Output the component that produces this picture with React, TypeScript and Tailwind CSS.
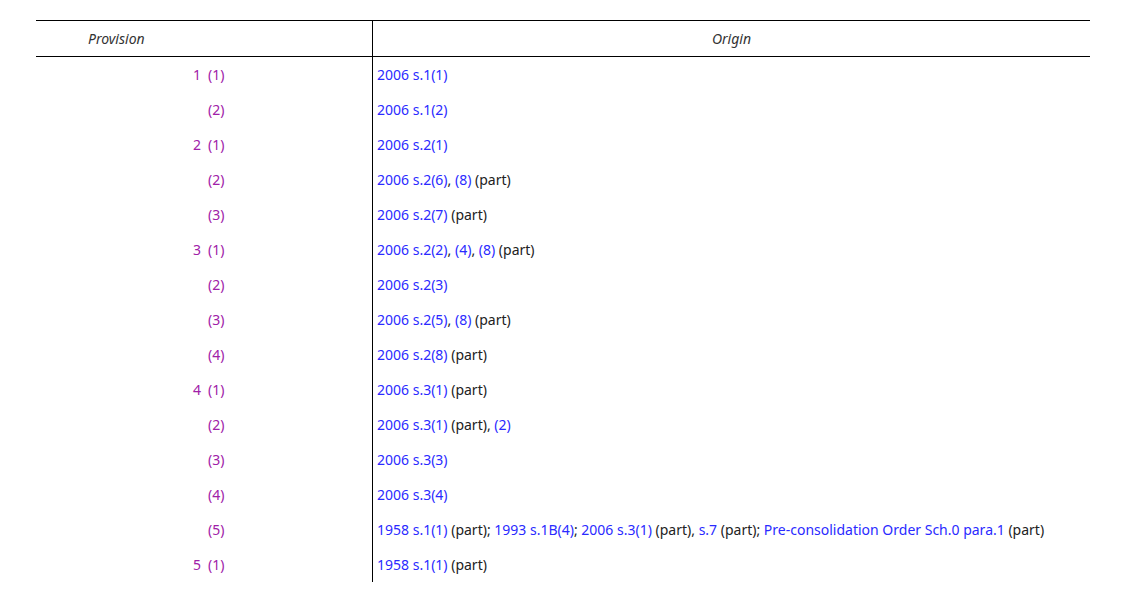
type Part = { t: string; link?: boolean }

const L = (t: string): Part => ({ t, link: true })
const T = (t: string): Part => ({ t })

const rows: { n?: string; s: string; origin: Part[] }[] = [
  { n: '1', s: '(1)', origin: [L('2006 s.1(1)')] },
  { s: '(2)', origin: [L('2006 s.1(2)')] },
  { n: '2', s: '(1)', origin: [L('2006 s.2(1)')] },
  { s: '(2)', origin: [L('2006 s.2(6)'), T(', '), L('(8)'), T(' (part)')] },
  { s: '(3)', origin: [L('2006 s.2(7)'), T(' (part)')] },
  { n: '3', s: '(1)', origin: [L('2006 s.2(2)'), T(', '), L('(4)'), T(', '), L('(8)'), T(' (part)')] },
  { s: '(2)', origin: [L('2006 s.2(3)')] },
  { s: '(3)', origin: [L('2006 s.2(5)'), T(', '), L('(8)'), T(' (part)')] },
  { s: '(4)', origin: [L('2006 s.2(8)'), T(' (part)')] },
  { n: '4', s: '(1)', origin: [L('2006 s.3(1)'), T(' (part)')] },
  { s: '(2)', origin: [L('2006 s.3(1)'), T(' (part), '), L('(2)')] },
  { s: '(3)', origin: [L('2006 s.3(3)')] },
  { s: '(4)', origin: [L('2006 s.3(4)')] },
  {
    s: '(5)',
    origin: [
      L('1958 s.1(1)'), T(' (part); '), L('1993 s.1B(4)'), T('; '), L('2006 s.3(1)'), T(' (part), '),
      L('s.7'), T(' (part); '), L('Pre-consolidation Order Sch.0 para.1'), T(' (part)'),
    ],
  },
  { n: '5', s: '(1)', origin: [L('1958 s.1(1)'), T(' (part)')] },
]

export default function App() {
  return (
    <div className="w-[1138px] h-[592px] overflow-hidden bg-white pt-5 pl-9 text-[14px] leading-[19px] text-[#222] font-['Liberation_Sans',Arial,sans-serif]">
      <div className="w-[1054px]">
        <div className="flex border-t border-b border-black h-[37px] items-center italic text-[#333]">
          <div className="w-[337px] border-r border-black h-full flex items-center pl-[52px]">Provision</div>
          <div className="flex-1 text-center">Origin</div>
        </div>
        {rows.map((r, i) => (
          <div key={i} className="flex">
            <div className="w-[337px] border-r border-black py-2 pl-[153px] flex text-[#a020a8]">
              <span className="w-[12px] text-right">{r.n ?? ''}</span>
              <span className="ml-[7px]">{r.s}</span>
            </div>
            <div className="flex-1 py-2 pl-1 pr-2">
              {r.origin.map((p, j) =>
                p.link ? (
                  <span key={j} className="text-[#2a2aff]">{p.t}</span>
                ) : (
                  <span key={j}>{p.t}</span>
                )
              )}
            </div>
          </div>
        ))}
      </div>
    </div>
  )
}
